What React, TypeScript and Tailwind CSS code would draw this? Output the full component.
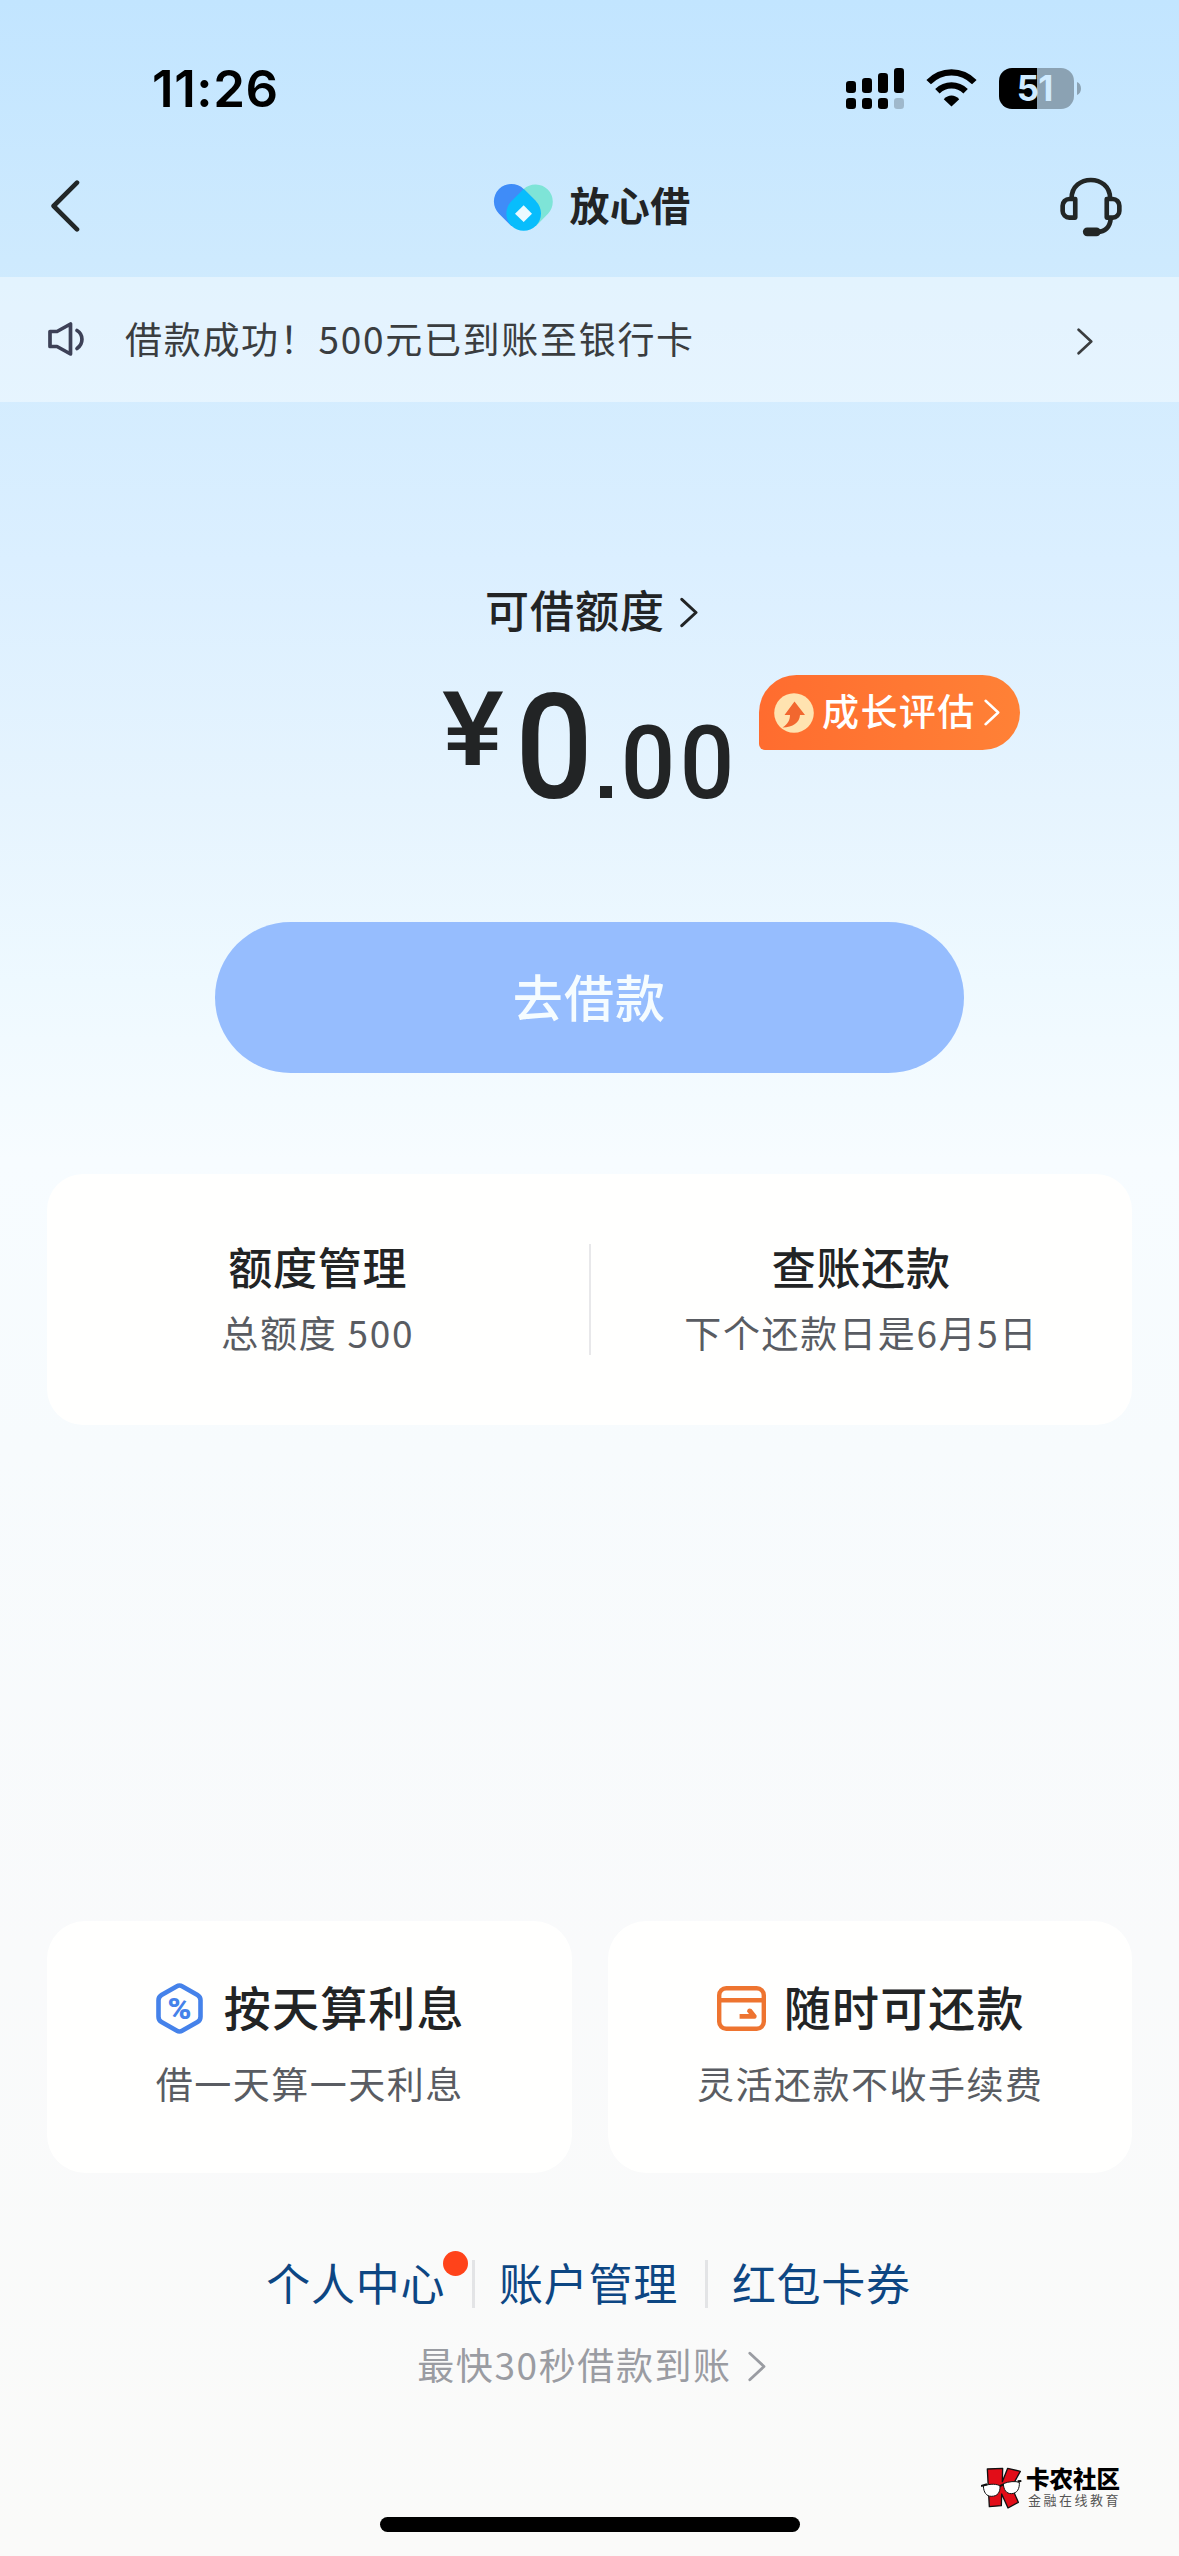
type IconProps = { className?: string };

function Chevron({ className }: IconProps) {
  return (
    <svg className={className} viewBox="0 0 18 30" fill="none" stroke="currentColor" strokeLinecap="round" strokeLinejoin="round">
      <path d="M1.8 1.8 L16 15 L1.8 28.2" />
    </svg>
  );
}

function BackIcon() {
  return (
    <svg className="w-[30px] h-[54px]" viewBox="0 0 30 54" fill="none" stroke="#222728" strokeWidth="4.6" strokeLinecap="round" strokeLinejoin="round">
      <path d="M27 2.6 L3.6 26 L27 49.4" />
    </svg>
  );
}

function SignalIcon() {
  const bars = [
    { x: 0, y: 13 },
    { x: 16, y: 10 },
    { x: 32, y: 5 },
    { x: 48, y: 0 },
  ];
  return (
    <svg className="w-[58px] h-[41px]" viewBox="0 0 58 41">
      {bars.map((bar, index) => (
        <g key={bar.x}>
          <rect x={bar.x} y={bar.y} width="10" height={25 - bar.y} rx="3.2" />
          <rect x={bar.x} y="30" width="10" height="11" rx="3.2" opacity={index === 3 ? 0.2 : 1} />
        </g>
      ))}
    </svg>
  );
}

function WifiIcon() {
  return (
    <svg className="w-[51px] h-[38px]" viewBox="378 86 152 113" fill="none" stroke="#000" strokeWidth="19">
      <path d="M386 125 C424 86 484 86 522 125" />
      <path d="M412 152 C436 129 472 129 496 152" />
      <path d="M431 176 C444 161 464 161 477 176 L454 198 Z" fill="#000" stroke="none" />
    </svg>
  );
}

function Battery() {
  return (
    <div className="flex items-center gap-[3px]">
      <div className="w-[75px] h-[41px] rounded-[13px] overflow-hidden bg-[linear-gradient(to_right,#000_38px,#8ba2b3_38px)] flex items-center justify-center">
        <span className="font-['Inter'] font-bold text-[35px] leading-none tracking-[-1px] pr-[4px] text-[#d0ebff]">51</span>
      </div>
      <svg className="w-1 h-[13px]" viewBox="0 0 4 13" fill="#8ba2b3">
        <path d="M0 0 C5.3 2 5.3 11 0 13 Z" />
      </svg>
    </div>
  );
}

function BrandLogo() {
  return (
    <svg className="w-[61px] h-[48px]" viewBox="102 98 183 144">
      <path d="M267 190 A52 52 0 0 0 194 116 L157 153 L157 190 L194 190 L231 227 Z" fill="#7ee4d7" />
      <path d="M120 190 A52 52 0 0 1 194 116 L231 153 L231 227 L157 227 Z" fill="#3f8cf8" />
      <path d="M194 116 L231 153 A52 52 0 1 1 157 153 Z" fill="#08bdfc" />
      <path d="M194 165 L219 190 L194 215 L168 190 Z" fill="#eafaff" />
    </svg>
  );
}

function HeadsetIcon() {
  return (
    <svg className="w-[62px] h-[60px]" viewBox="780 412 187 180" fill="none" stroke="#222625" strokeWidth="14" strokeLinejoin="round">
      <path d="M815 476 C815 402 931 402 931 476" />
      <path d="M826 478 V534 H808 A20 20 0 0 1 788 514 V498 A20 20 0 0 1 808 478 Z" />
      <path d="M921 478 V534 H939 A20 20 0 0 0 959 514 V498 A20 20 0 0 0 939 478 Z" />
      <path d="M933 536 C931 564 915 577 893 577" />
      <path d="M862 577 H890" strokeWidth="26" strokeLinecap="round" />
    </svg>
  );
}

function SpeakerIcon() {
  return (
    <svg className="w-[38px] h-[36px]" viewBox="47 321.5 38 36" fill="none" stroke="#3d4157" strokeWidth="3.7" strokeLinejoin="round" strokeLinecap="round">
      <path d="M50 331 H57 L70.5 323.5 V353.5 L57 346 H50 Z" />
      <path d="M77 330 C83.6 334 83.6 343.5 77 348" />
    </svg>
  );
}

function GrowthIcon() {
  return (
    <svg className="w-10 h-10" viewBox="0 0 40 40">
      <circle cx="20" cy="20" r="19.8" fill="#ffe3b0" />
      <path d="M20.5 8.5 L31 22 H26 C25.5 30 19 34 8.5 34.5 C14 31 16 27 16 22 H10.5 Z" fill="#f2672f" />
    </svg>
  );
}

function PercentIcon() {
  return (
    <svg className="w-[47px] h-[51px]" viewBox="0 0 47 51">
      <path
        d="M20.5 3.4 Q23.5 1.7 26.5 3.4 L41.5 12 Q44.5 13.8 44.5 17.3 V33.7 Q44.5 37.2 41.5 39 L26.5 47.6 Q23.5 49.3 20.5 47.6 L5.5 39 Q2.5 37.2 2.5 33.7 V17.3 Q2.5 13.8 5.5 12 Z"
        fill="none"
        stroke="#4582ea"
        strokeWidth="4.6"
      />
      <text x="23.5" y="35.7" textAnchor="middle" textLength="24" lengthAdjust="spacingAndGlyphs" className="font-['Roboto'] font-black text-[29px]" fill="#4582ea">
        %
      </text>
    </svg>
  );
}

function RepayIcon() {
  return (
    <svg className="w-[49px] h-[45px]" viewBox="0 0 49 45" fill="none" stroke="#ee7430" strokeWidth="4.4">
      <rect x="2.2" y="2.2" width="44.6" height="40.6" rx="7" />
      <path d="M2 14.3 H47" />
      <path d="M22.6 28 H32 L30 25.5 Q30.5 21.5 34.5 23 L39.6 29.5 Q40 32.5 37.5 32.8 H22.6 Z" fill="#ee7430" stroke="none" />
    </svg>
  );
}

function WatermarkLogo() {
  return (
    <svg className="w-[41px] h-[42px]" viewBox="122 111 123 126" stroke="#111" strokeWidth="4" strokeLinejoin="round">
      <path d="M141 117 L187 115 L186 155 L202 115 L240 124 L214 171 L234 217 L203 234 L184 192 L183 227 L147 230 Z" fill="#e20d18" />
      <path d="M129 168 C150 160 172 162 179 168 C180 187 172 199 153 199 C138 199 130 187 129 168 Z" fill="#fff" strokeWidth="3" />
      <path d="M189 161 C205 154 226 153 237 157 C238 176 231 190 213 191 C198 191 190 180 189 161 Z" fill="#fff" strokeWidth="3" />
      <path d="M122 168 L140 163 M179 168 L190 163 M232 154 L243 153" fill="none" strokeWidth="6" />
    </svg>
  );
}

const accountEntries = [
  { title: '额度管理', detail: '总额度 500' },
  { title: '查账还款', detail: '下个还款日是6月5日' },
];

const features = [
  { icon: PercentIcon, title: '按天算利息', detail: '借一天算一天利息', gap: 'gap-[21px]' },
  { icon: RepayIcon, title: '随时可还款', detail: '灵活还款不收手续费', gap: 'gap-[18px]' },
];

const links = ['个人中心', '账户管理', '红包卡券'];

export default function App() {
  return (
    <div className="w-[1179px] h-[2556px] overflow-hidden flex flex-col font-['Noto_Sans_CJK_SC',sans-serif] text-[#222425] bg-[linear-gradient(to_bottom,#c2e5ff_0px,#ceeafe_260px,#dbefff_560px,#e6f4fe_800px,#eef9ff_980px,#f7fcff_1160px,#f7fbfd_1450px,#f9fafb_1950px,#fafaf9_2556px)]">
      <header>
        <div className="h-[132px] pt-11 pl-[152px] pr-[98px] flex items-center justify-between">
          <span className="font-['Inter'] font-semibold text-[51px] leading-none tracking-[0.6px] text-black">11:26</span>
          <div className="flex items-center">
            <SignalIcon />
            <div className="w-[22px]" />
            <WifiIcon />
            <div className="w-[22px]" />
            <Battery />
          </div>
        </div>
        <div className="h-[145px] pt-1 pl-[50px] pr-[57px] grid grid-cols-[1fr_auto_1fr] items-center">
          <BackIcon />
          <div className="flex items-center gap-[15px] pl-[12px]">
            <BrandLogo />
            <span className="text-[40px] leading-[60px] h-[60px] font-bold tracking-[0.4px] -mt-[6px]">放心借</span>
          </div>
          <div className="justify-self-end">
            <HeadsetIcon />
          </div>
        </div>
      </header>

      <div className="h-[125px] bg-white/42 pl-[47px] pr-[86px] flex items-center text-[#3a3d3f]">
        <SpeakerIcon />
        <p className="flex-1 ml-[40px] text-[37px] leading-[56px] tracking-[1.7px] -mt-1">借款成功！500元已到账至银行卡</p>
        <Chevron className="w-4 h-[29px] mt-1 stroke-[3]" />
      </div>

      <main className="flex flex-col">
        <div className="mt-[180px] h-[60px] pl-[485px] flex items-center gap-[15px]">
          <h1 className="text-[44px] leading-[60px] font-medium tracking-[1px] -mt-[6px]">可借额度</h1>
          <Chevron className="w-[18px] h-[31px] stroke-[3]" />
        </div>

        <div className="mt-8 h-[248px] pl-[443px] flex items-start font-['Roboto'] font-medium leading-none">
          <span className="mt-[4px] w-[60px] flex justify-center text-[103px] scale-x-[1.13]">¥</span>
          <span className="mt-[1px] ml-[18px] w-[66px] flex justify-center text-[147px] scale-x-[0.93]">0</span>
          <span className="mt-[112px] ml-[13px] w-[12px] h-[12px] bg-current" />
          <span className="mt-[38px] ml-[8px] w-[56px] flex justify-center text-[102px] scale-x-[0.94]">0</span>
          <span className="mt-[38px] ml-[3px] w-[56px] flex justify-center text-[102px] scale-x-[0.94]">0</span>
          <div className="mt-px ml-[24px] w-[261px] h-[75px] pl-[15px] flex items-center rounded-[38px] rounded-bl-[6px] bg-linear-to-r from-[#ff6c2f] to-[#ff8136] text-white">
            <GrowthIcon />
            <span className="ml-[8px] font-['Noto_Sans_CJK_SC',sans-serif] text-[37px] leading-[56px] tracking-[1.4px] -mt-[6px]">成长评估</span>
            <Chevron className="ml-[8px] w-4 h-[27px] stroke-[2.8]" />
          </div>
        </div>

        <button className="self-center w-[749px] h-[151px] rounded-full bg-[#96bdfe] text-[#f5fcff] text-[50px] leading-[72px] font-medium tracking-[1.2px] pb-[5px]">
          去借款
        </button>

        <section className="mt-[101px] mx-[47px] h-[251px] rounded-[36px] bg-[#fffffe] flex items-center">
          {accountEntries.map((entry, index) => (
            <div key={entry.title} className={`flex-1 text-center ${index === 1 ? 'border-l-2 border-[#e8e8ea]' : ''}`}>
              <h2 className="-mt-[3px] text-[44px] leading-[50px] font-medium tracking-[0.7px]">{entry.title}</h2>
              <p className="mt-[16px] -mb-[2px] text-[37px] leading-[50px] tracking-[1.7px] text-[#595c62]">{entry.detail}</p>
            </div>
          ))}
        </section>

        <section className="mt-[496px] mx-[47px] grid grid-cols-2 gap-9">
          {features.map((feature) => (
            <div key={feature.title} className="h-[252px] pt-[57px] rounded-[38px] bg-[#fffffe]">
              <div className={`h-[60px] pl-[2px] flex items-center justify-center ${feature.gap}`}>
                <feature.icon />
                <h2 className="text-[47px] leading-[60px] font-medium tracking-[1.2px] -mt-1">{feature.title}</h2>
              </div>
              <p className="mt-[17px] pl-px text-center text-[37px] leading-[56px] tracking-[1.5px] text-[#595c62]">{feature.detail}</p>
            </div>
          ))}
        </section>
      </main>

      <footer className="flex flex-col">
        <nav className="mt-[87px] pr-[2px] flex items-center justify-center text-[44px] leading-[50px] text-[#0d4683]">
          {links.map((link, index) => (
            <div key={link} className="flex items-center">
              {index > 0 && <div className="w-[3px] h-12 ml-[27px] mr-[24px] bg-[#e3e4e6]" />}
              <a className="relative tracking-[0.7px] -mt-1">
                {link}
                {index === 0 && <span className="absolute -right-[23px] -top-[6px] w-[25px] h-[25px] rounded-full bg-[#ff431a]" />}
              </a>
            </div>
          ))}
        </nav>
        <div className="mt-[32px] pl-1 h-[52px] flex items-center justify-center gap-[16px] text-[#9a9ca2]">
          <p className="text-[37px] leading-[56px] tracking-[1.6px] -mt-[5px]">最快30秒借款到账</p>
          <Chevron className="w-[18px] h-[31px] stroke-[2.8]" />
        </div>

        <div className="mt-[75px] pr-[58px] h-[42px] flex items-center justify-end gap-1">
          <WatermarkLogo />
          <div>
            <p className="h-[24px] text-[23.5px] leading-[20px] font-black text-black">卡农社区</p>
            <p className="h-[16px] pl-[2px] text-[13px] leading-[16px] tracking-[2.5px] text-[#555]">金融在线教育</p>
          </div>
        </div>
        <div className="mt-[8px] self-center w-[420px] h-[15px] rounded-full bg-black" />
      </footer>
    </div>
  );
}
